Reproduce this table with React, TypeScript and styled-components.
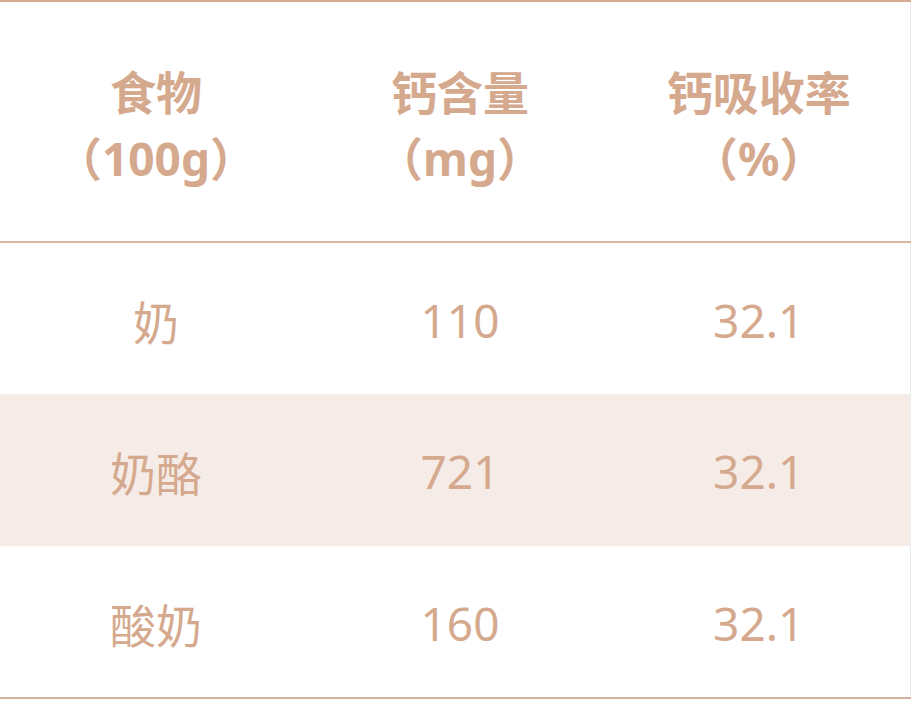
import styled, { createGlobalStyle } from "styled-components";

const GlobalStyle = createGlobalStyle`
    html, body {
        margin: 0;
        padding: 0;
        background: #ffffff;
    }

    body {
        font-family: "Noto Sans", "Noto Sans CJK SC", sans-serif;
    }
`;

const rows = [
    { food: "奶", calcium: "110", rate: "32.1" },
    { food: "奶酪", calcium: "721", rate: "32.1" },
    { food: "酸奶", calcium: "160", rate: "32.1" },
];

export default function App() {
    return (
        <>
            <GlobalStyle />
            <Table>
                <colgroup>
                    <Col $width={312} />
                    <Col $width={296} />
                    <Col $width={302} />
                </colgroup>
                <thead>
                    <tr>
                        <HeadCell>食物<br />（100g）</HeadCell>
                        <HeadCell>钙含量<br />（mg）</HeadCell>
                        <HeadCell>钙吸收率<br />（%）</HeadCell>
                    </tr>
                </thead>
                <tbody>
                    {rows.map((row, i) => (
                        <Row key={row.food} $shaded={i % 2 === 1}>
                            <Cell>{row.food}</Cell>
                            <Cell>{row.calcium}</Cell>
                            <Cell>{row.rate}</Cell>
                        </Row>
                    ))}
                </tbody>
            </Table>
        </>
    );
}

// Styled Components

const Table = styled.table`
    width: 910px;
    border-collapse: collapse;
    table-layout: fixed;
    border-top: 2px solid #d6ab91;
    border-bottom: 2px solid #d3b0a0;
    border-right: 1px solid #ececec;
    color: #d5a98e;
`;

const Col = styled.col<{ $width: number }>`
    width: ${(p) => p.$width}px;
`;

const HeadCell = styled.th`
    height: 241px;
    padding: 6px 0 0;
    box-sizing: border-box;
    font-size: 46px;
    font-weight: 700;
    line-height: 66px;
    text-align: center;
    border-bottom: 2px solid #dcb6a3;
    vertical-align: middle;
`;

const Row = styled.tr<{ $shaded: boolean }>`
    background: ${(p) => (p.$shaded ? "#f6ece7" : "#ffffff")};
`;

const Cell = styled.td`
    height: 152px;
    padding: 2px 0 0;
    box-sizing: border-box;
    font-size: 46px;
    font-weight: 400;
    text-align: center;
    vertical-align: middle;
`;
